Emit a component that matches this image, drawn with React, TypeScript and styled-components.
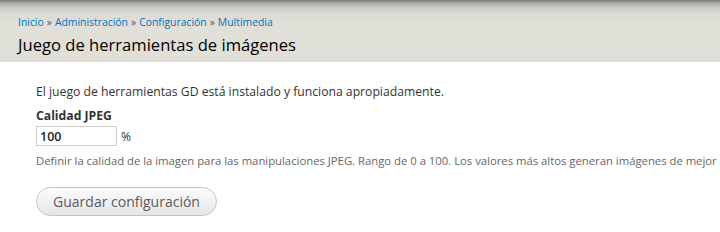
import React from "react";
import styled, { createGlobalStyle } from "styled-components";

const Global = createGlobalStyle`
  html, body { margin: 0; padding: 0; background: #fff; }
  body { font-family: "Open Sans", "DejaVu Sans", sans-serif; color: #333; overflow: hidden; }
`;

const Page = styled.div`
  width: 720px;
  height: 232px;
  overflow: hidden;
  background: #fff;
`;

const Header = styled.header`
  height: 62px;
  box-sizing: border-box;
  padding: 14px 18px 0;
  background: linear-gradient(to bottom, #7d7c78 0px, #a9a8a3 3px, #cfcec8 8px, #dcdbd4 14px, #e0dfd8 24px, #e0dfd8 100%);
`;

const Breadcrumb = styled.nav`
  font-size: 10.4px;
  line-height: 16px;
  color: #0074bd;
`;

const Crumb = styled.a`
  color: #0074bd;
  text-decoration: none;
`;

const Sep = styled.span`
  color: #555;
  margin: 0 3px;
`;

const Title = styled.h1`
  margin: 3px 0 0;
  font-size: 16.6px;
  font-weight: normal;
  line-height: 24px;
  color: #000;
`;

const Content = styled.main`
  padding: 20px 36px 0;
  font-size: 12.2px;
`;

const Intro = styled.p`
  margin: 0 0 5px;
  line-height: 20px;
  color: #333;
`;

const Label = styled.label`
  display: block;
  font-weight: bold;
  font-size: 12.2px;
  line-height: 18px;
  color: #333;
`;

const FieldRow = styled.div`
  display: flex;
  align-items: center;
  gap: 4px;
  margin-top: 1px;
`;

const Input = styled.input`
  width: 81px;
  height: 20px;
  box-sizing: border-box;
  border: 1px solid #ccc;
  padding: 0 3px;
  font: 600 12.5px "Open Sans", sans-serif;
  color: #222;
  outline: none;
`;

const Suffix = styled.span`
  font-size: 12.2px;
  color: #333;
`;

const Description = styled.div`
  margin-top: 6px;
  font-size: 11.3px;
  line-height: 18px;
  color: #666;
  white-space: nowrap;
`;

const Button = styled.button`
  margin-top: 17px;
  width: 181px;
  height: 29px;
  border: 1px solid #c4c4c4;
  border-radius: 15px;
  background: linear-gradient(to bottom, #fcfcfc, #e6e6e6);
  font: 14px "Open Sans", sans-serif;
  color: #5a5a5a;
  cursor: pointer;
`;

export default function App() {
  return (
    <Page>
      <Global />
      <Header>
        <Breadcrumb>
          <Crumb href="#">Inicio</Crumb>
          <Sep>»</Sep>
          <Crumb href="#">Administración</Crumb>
          <Sep>»</Sep>
          <Crumb href="#">Configuración</Crumb>
          <Sep>»</Sep>
          <Crumb href="#">Multimedia</Crumb>
        </Breadcrumb>
        <Title>Juego de herramientas de imágenes</Title>
      </Header>
      <Content>
        <Intro>El juego de herramientas GD está instalado y funciona apropiadamente.</Intro>
        <Label htmlFor="jpeg">Calidad JPEG</Label>
        <FieldRow>
          <Input id="jpeg" defaultValue="100" />
          <Suffix>%</Suffix>
        </FieldRow>
        <Description>
          Definir la calidad de la imagen para las manipulaciones JPEG. Rango de 0 a 100. Los valores más altos generan imágenes de mejor
        </Description>
        <Button>Guardar configuración</Button>
      </Content>
    </Page>
  );
}
